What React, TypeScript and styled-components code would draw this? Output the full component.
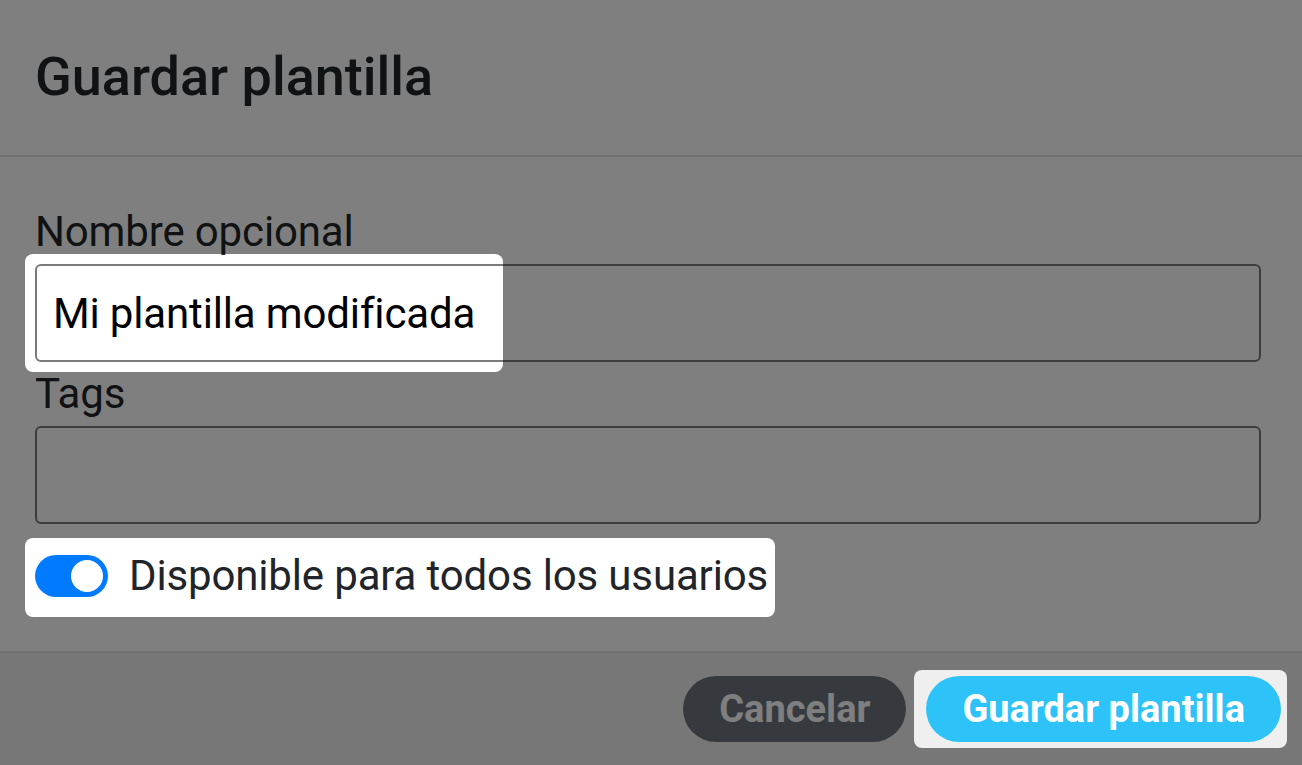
import * as React from 'react';
import styled, { createGlobalStyle, css } from 'styled-components';

// Tour spotlights: windows cut into the dimming layer
const SPOTS = [
  { x: 25, y: 254, w: 478, h: 118 },
  { x: 25, y: 538, w: 750, h: 79 },
  { x: 914, y: 670, w: 373, h: 78 },
];

export default function App() {
  return (
    <>
      <GlobalStyle />
      <Modal>
        <Header>
          <Title>Guardar plantilla</Title>
        </Header>

        <Body>
          <Label>Nombre opcional</Label>
          <Input defaultValue="Mi plantilla modificada" />
          <Label>Tags</Label>
          <Input />

          <SwitchRow>
            <Switch checked>
              <Knob />
            </Switch>
            <SwitchLabel>Disponible para todos los usuarios</SwitchLabel>
          </SwitchRow>
        </Body>

        <Footer>
          <Button variant="secondary">Cancelar</Button>
          <Button variant="info">Guardar plantilla</Button>
        </Footer>
      </Modal>

      <Backdrop width="1302" height="765" viewBox="0 0 1302 765">
        <defs>
          <mask id="spots">
            <rect width="1302" height="765" fill="white" />
            {SPOTS.map((s, i) => (
              <rect key={i} x={s.x} y={s.y} width={s.w} height={s.h} rx="8" fill="black" />
            ))}
          </mask>
        </defs>
        <rect width="1302" height="765" fill="rgba(0,0,0,0.5)" mask="url(#spots)" />
      </Backdrop>
    </>
  );
}

const GlobalStyle = createGlobalStyle`
  html, body {
    margin: 0;
    background: #fff;
    overflow: hidden;
  }
  body {
    font-family: Roboto, "Noto Sans", sans-serif;
    color: #212529;
  }
`;

const Modal = styled.div`
  width: 1302px;
  height: 765px;
  display: flex;
  flex-direction: column;
  background: #fff;
`;

const Header = styled.div`
  height: 155px;
  display: flex;
  align-items: center;
  padding: 0 35px;
  border-bottom: 2px solid #dee2e6;
`;

const Title = styled.h5`
  margin: 0;
  font-size: 54px;
  font-weight: 500;
  line-height: 1.2;
`;

const Body = styled.div`
  display: flex;
  flex-direction: column;
  padding: 43px 41px 43px 35px;
`;

const text = css`
  font-size: 42px;
  letter-spacing: -0.15px;
  line-height: 64px;
`;

const Label = styled.label`
  ${text}
`;

const Input = styled.input`
  box-sizing: border-box;
  width: 100%;
  height: 98px;
  flex: none;
  margin: 0;
  padding: 0 16px;
  border: 2px solid #7a7a7a;
  border-radius: 6px;
  background: #fff;
  font-family: inherit;
  ${text}
  color: #000;
  outline: none;
`;

const SwitchRow = styled.div`
  display: flex;
  align-items: center;
  gap: 21px;
  margin-top: 20px;
  height: 64px;
`;

const Switch = styled.span<{ checked?: boolean }>`
  box-sizing: border-box;
  width: 73px;
  height: 42px;
  border-radius: 21px;
  display: flex;
  align-items: center;
  justify-content: ${p => (p.checked ? 'flex-end' : 'flex-start')};
  padding: 0 5px;
  background: ${p => (p.checked ? '#007bff' : '#dee2e6')};
`;

const Knob = styled.span`
  width: 32px;
  height: 32px;
  border-radius: 50%;
  background: #fff;
`;

const SwitchLabel = styled.span`
  ${text}
`;

const Footer = styled.div`
  flex: 1;
  display: flex;
  justify-content: flex-end;
  align-items: flex-start;
  gap: 20px;
  padding: 23px 21px 0 0;
  background: #efefef;
  border-top: 2px solid #dee2e6;
`;

const variants = {
  secondary: css`
    background: #6c757d;
  `,
  info: css`
    background: #2ec3f8;
  `,
};

const Button = styled.button<{ variant: keyof typeof variants }>`
  height: 66px;
  padding: 0 36px;
  border: none;
  border-radius: 33px;
  font-family: inherit;
  font-size: 38px;
  font-weight: 700;
  color: #fff;
  ${p => variants[p.variant]}
`;

const Backdrop = styled.svg`
  position: fixed;
  left: 0;
  top: 0;
  pointer-events: none;
`;
